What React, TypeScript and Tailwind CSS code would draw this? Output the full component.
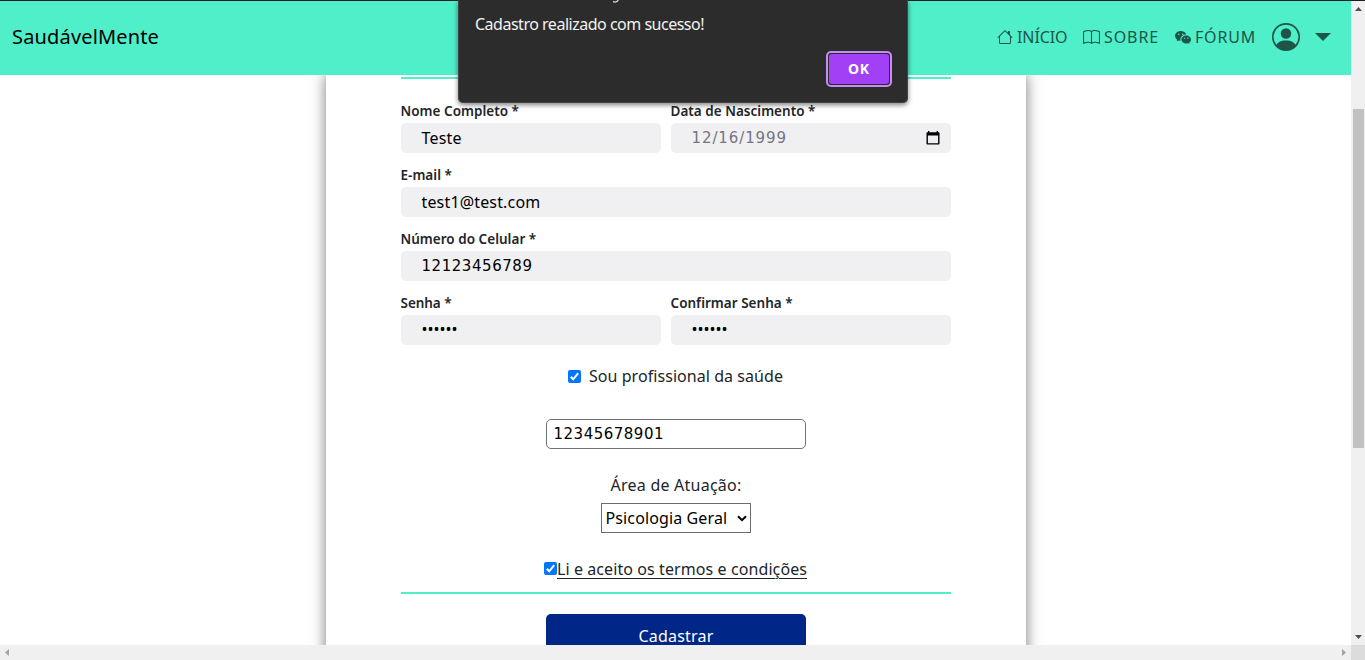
import type { ReactNode } from "react";
import { BsBook, BsHouse, BsPersonCircle, BsWechat } from "react-icons/bs";

function NavItem({ icon, className, children }: { icon: ReactNode; className: string; children: ReactNode }) {
  return (
    <a className={`flex items-center ${className}`}>
      {icon}
      <span className="pb-px">{children}</span>
    </a>
  );
}

function Field({ label, labelClass, width, valueClass, icon, children }: { label: string; labelClass: string; width: string; valueClass: string; icon?: ReactNode; children: ReactNode }) {
  return (
    <div className={`mb-[10px] ${width}`}>
      <div className={`h-6 whitespace-nowrap text-[13.5px] font-semibold leading-6 text-[#212529] ${labelClass}`}>{label}</div>
      <div className="flex h-[30px] items-center justify-between rounded-[5px] bg-[#f0f0f3] pl-[21px] pr-[11px]">
        <span className={valueClass}>{children}</span>
        {icon}
      </div>
    </div>
  );
}

function Checkbox() {
  return (
    <svg className="h-[13px] w-[13px] shrink-0" viewBox="0 0 13 13">
      <rect width="13" height="13" rx="2" fill="#0075ff" />
      <path d="M2.8 6.8 5.2 9.3 10.2 3.2" fill="none" stroke="#fff" strokeWidth="2" />
    </svg>
  );
}

function CalendarIcon() {
  return (
    <svg className="mb-px h-[14px] w-[14px]" viewBox="0 0 14 14">
      <path fill="#000" d="M2 0h1.4v1.2h7.2V0H12v1.2h.7q.8 0 .8.8v10.7q0 .8-.8.8H1.3q-.8 0-.8-.8V2q0-.8.8-.8H2zM1.9 4.6v7.6h10.2V4.6z" fillRule="evenodd" />
    </svg>
  );
}

export default function App() {
  return (
    <div className="relative flex h-[660px] w-[1365px] flex-col overflow-hidden bg-white font-['Noto_Sans',sans-serif] text-[16px] leading-6 text-[#212529]">
      <div className="h-px w-full shrink-0 bg-[#1c1c24]" />
      <div className="flex min-h-0 flex-1">
        <div className="flex w-[1351px] flex-col">
          <header className="relative flex h-[74px] shrink-0 items-center justify-between bg-[#4fefca] pb-[2px] pl-3 pr-5">
            <span className="text-[20px] tracking-[0.16px] text-black">SaudávelMente</span>
            <nav className="flex items-center text-[#1e5549]">
              <NavItem className="mr-[15px] w-[71px] gap-1 tracking-[-0.1px]" icon={<BsHouse className="h-4 w-4" />}>INÍCIO</NavItem>
              <NavItem className="mr-[15px] w-[77px] gap-1 tracking-[0.9px]" icon={<BsBook className="h-[17px] w-[17px]" />}>SOBRE</NavItem>
              <NavItem className="mr-[15px] w-[82px] gap-1 tracking-[0.8px]" icon={<BsWechat className="h-4 w-4 shrink-0" />}>FÓRUM</NavItem>
              <BsPersonCircle className="h-7 w-7" />
              <svg className="ml-[15px] h-2 w-4" viewBox="0 0 16 8">
                <path d="M0 0h16L8 8z" fill="currentColor" />
              </svg>
            </nav>
          </header>

          <main className="flex h-[570px] shrink-0 justify-center overflow-hidden">
            <section className="h-[700px] w-[700px] shrink-0 bg-white px-[75px] pt-[2px] shadow-[0_0_14px_#757b75]">
              <div className="h-[517px] border-y-2 border-[#4fefca] pt-5">
                <div className="flex gap-[10px]">
                  <Field width="w-[260px]" label="Nome Completo *" labelClass="tracking-[0.02px]" valueClass="pb-px text-black tracking-[0.2px]">Teste</Field>
                  <Field width="w-[280px]" label="Data de Nascimento *" labelClass="tracking-[0.02px]" valueClass="pb-px font-['DejaVu_Sans'] text-[15px] text-[#757580] tracking-[0.9px]" icon={<CalendarIcon />}>12/16/1999</Field>
                </div>
                <Field width="w-full" label="E-mail *" labelClass="tracking-[0.02px]" valueClass="pb-px text-black tracking-[0.16px]">test1@test.com</Field>
                <Field width="w-full" label="Número do Celular *" labelClass="tracking-[0.02px]" valueClass="pb-px font-['DejaVu_Sans'] text-[15px] text-black tracking-[0.55px]">12123456789</Field>
                <div className="flex gap-[10px]">
                  <Field width="w-[260px]" label="Senha *" labelClass="tracking-[-0.05px]" valueClass="pb-[2px] text-black">••••••</Field>
                  <Field width="w-[280px]" label="Confirmar Senha *" labelClass="tracking-[0.02px]" valueClass="pb-[2px] text-black">••••••</Field>
                </div>
                <div className="mt-[9px] flex h-6 items-center justify-center gap-2">
                  <Checkbox />
                  <span className="tracking-[0.06px]">Sou profissional da saúde</span>
                </div>
                <div className="mx-auto mt-[31px] flex h-[30px] w-[260px] items-center rounded-[5px] border border-[#6f6f7d] pb-px pl-[7px] font-['DejaVu_Sans'] text-[15px] tracking-[0.5px] text-black">12345678901</div>
                <div className="mt-6 h-6 pl-px text-center tracking-[0.23px]">Área de Atuação:</div>
                <div className="mx-auto mt-[6px] flex h-[30px] w-[150px] items-center justify-between border border-[#6b6b6b] pl-1 pr-[3px] tracking-[0.12px] text-black">
                  Psicologia Geral
                  <svg className="h-[7px] w-[10px]" viewBox="0 0 10 7">
                    <path d="M1 1.2 5 5.2 9 1.2" fill="none" stroke="#000" strokeWidth="2" />
                  </svg>
                </div>
                <div className="mt-6 flex h-6 items-center justify-center">
                  <div className="mb-[2px]"><Checkbox /></div>
                  <span className="tracking-[0.09px] underline decoration-1 underline-offset-[3px]">Li e aceito os termos e condições</span>
                </div>
              </div>
              <button className="mx-auto mt-5 block h-[44px] w-[260px] rounded-[5px] bg-[#002687] pb-px pl-px tracking-[0.2px] text-white">Cadastrar</button>
            </section>
          </main>

          <div className="flex h-[15px] shrink-0 items-center justify-between bg-[#f0f0f0] px-[5px]">
            <svg className="h-[7px] w-1" viewBox="0 0 4 7"><path d="M4 0v7L0 3.5z" fill="#a3a3a3" /></svg>
            <svg className="h-[7px] w-1" viewBox="0 0 4 7"><path d="M0 0v7l4-3.5z" fill="#a3a3a3" /></svg>
          </div>
        </div>

        <div className="flex w-[14px] flex-col bg-[#f0f0f0]">
          <div className="flex h-[108px] flex-col items-center pt-[6px]">
            <svg className="h-1 w-[7px]" viewBox="0 0 7 4"><path d="M0 4h7L3.5 0z" fill="#505050" /></svg>
          </div>
          <div className="ml-[2px] h-[339px] w-[11px] bg-[#c1c1c1]" />
          <div className="flex flex-1 flex-col items-center justify-end pb-[6px]">
            <svg className="h-1 w-[7px]" viewBox="0 0 7 4"><path d="M0 0h7L3.5 4z" fill="#505050" /></svg>
          </div>
          <div className="h-[15px] bg-[#dcdcdc]" />
        </div>
      </div>

      <div className="absolute left-[458px] top-0 flex h-[103px] w-[450px] flex-col rounded-b-[5px] border border-t-0 border-[#454545] bg-[#2c2c2c] px-4 text-white shadow-[0_2px_5px_rgba(0,0,0,0.5)]">
        <svg className="ml-[137px] h-[3px] w-[8px] shrink-0" viewBox="0 0 8 3">
          <path d="M1 1.7Q5 3 6.3 0" fill="none" stroke="#ddd" strokeWidth="1.3" />
        </svg>
        <p className="mt-[9px] h-6 whitespace-nowrap text-[16px] tracking-[-0.49px] text-[#f2f2f2]">Cadastro realizado com sucesso!</p>
        <div className="-mr-px mt-[15px] flex h-9 w-[66px] items-center justify-center self-end rounded-[5px] border-2 border-[#c58cf8] bg-[#2c2c2c] p-px">
          <button className="h-full w-full rounded-[3px] bg-[#a140f5] text-[14px] font-bold leading-none tracking-[0.8px] text-white">OK</button>
        </div>
      </div>
    </div>
  );
}
